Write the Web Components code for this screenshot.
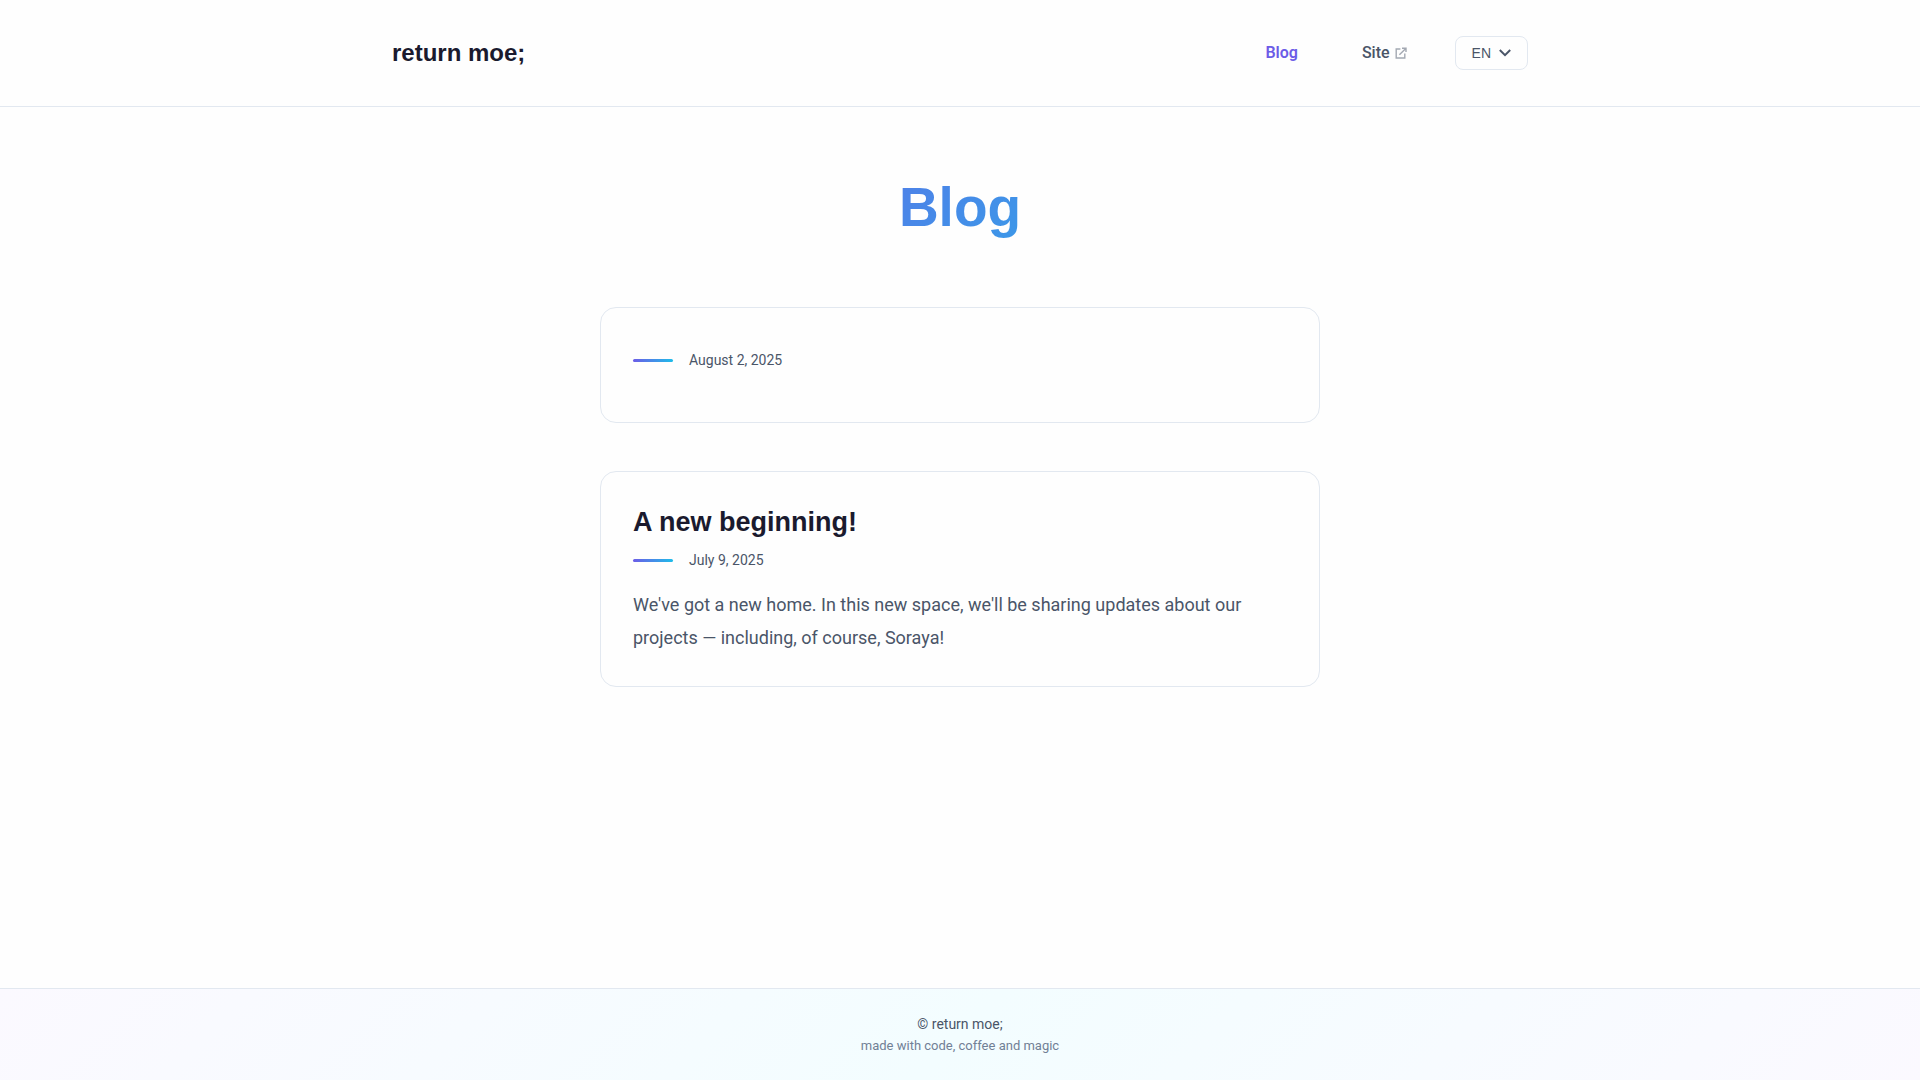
<!DOCTYPE html>
<html lang="en">
<head>
<meta charset="utf-8">
<meta name="viewport" content="width=device-width, initial-scale=1">
<title>Blog</title>
<style>
:root {
  --ink: #1a1a2e;
  --text: #4a5568;
  --muted: #718096;
  --line: #e2e8f0;
  --page: #fefefe;
  --accent: #6c5ce7;
  --accent-end: #1ebce9;
  --gradient: linear-gradient(135deg, #6c5ce7 0%, #1ebce9 100%);
  --heading-font: "Liberation Sans", Arial, sans-serif;
}
body {
  margin: 0;
  background: var(--page);
  color: var(--text);
  font: 400 16px/1.6 Roboto, sans-serif;
}
</style>
</head>
<body>
<blog-page>
  <site-header slot="header" brand="return moe;">
    <nav-link href="#blog" current>Blog</nav-link>
    <nav-link href="#site" external>Site</nav-link>
    <language-button slot="tools">EN</language-button>
  </site-header>
  <page-title>Blog</page-title>
  <post-card date="August 2, 2025" datetime="2025-08-02"></post-card>
  <post-card heading="A new beginning!" date="July 9, 2025" datetime="2025-07-09">We've got a new home. In this new space, we'll be sharing updates about our projects — including, of course, Soraya!</post-card>
  <site-footer slot="footer">
    <span>© return moe;</span>
    <span slot="note">made with code, coffee and magic</span>
  </site-footer>
</blog-page>
<script>
function define(name, render) {
  customElements.define(name, class extends HTMLElement {
    constructor() {
      super();
      this.attachShadow({ mode: "open" });
    }
    connectedCallback() {
      this.shadowRoot.innerHTML = render(this);
    }
  });
}

define("blog-page", () => `
  <style>
    :host { display: flex; flex-direction: column; min-height: 100vh; }
    main { flex: 1; padding: 64px 32px; }
    .column { display: flex; flex-direction: column; gap: 48px; max-width: 720px; margin: 0 auto; }
  </style>
  <slot name="header"></slot>
  <main><div class="column"><slot></slot></div></main>
  <slot name="footer"></slot>`);

define("site-header", el => `
  <style>
    :host { display: block; border-bottom: 1px solid var(--line); }
    .bar { display: flex; align-items: center; gap: 48px; max-width: 1136px; padding: 32px; margin: 0 auto; }
    .brand { margin-right: auto; color: var(--ink); font: 700 24px/42px var(--heading-font); text-decoration: none; }
    nav { display: flex; align-items: center; gap: 64px; }
  </style>
  <header class="bar">
    <a class="brand" href="#home">${el.getAttribute("brand")}</a>
    <nav aria-label="Main"><slot></slot></nav>
    <slot name="tools"></slot>
  </header>`);

define("nav-link", el => `
  <style>
    :host { display: block; }
    a { display: flex; align-items: center; gap: 5px; color: var(--text); font-weight: 500; line-height: 26px; text-decoration: none; }
    :host([current]) a { color: var(--accent); font-weight: 600; }
    svg { width: 12px; height: 12px; opacity: .5; }
  </style>
  <a href="${el.getAttribute("href")}"${el.hasAttribute("current") ? ' aria-current="page"' : ""}><slot></slot>${el.hasAttribute("external") ? `
    <svg viewBox="0 0 12 12" fill="none" stroke="currentColor" stroke-width="1.4" aria-hidden="true">
      <path d="M5.4 2H1.2v9h8.6V6.6M7 1.2h4V5M10.8 1.4 4.4 7.8"/>
    </svg>` : ""}</a>`);

define("language-button", () => `
  <style>
    :host { display: block; }
    button { display: flex; align-items: center; gap: 8px; height: 34px; padding: 0 16px; border: 1px solid var(--line); border-radius: 8px; background: transparent; color: var(--text); font: 400 14px/16px var(--heading-font); cursor: pointer; }
    svg { width: 12px; height: 12px; }
  </style>
  <button type="button" aria-haspopup="listbox"><slot></slot>
    <svg viewBox="0 0 12 12" fill="none" stroke="currentColor" stroke-width="2" aria-hidden="true"><path d="M.8 3 6 8.2 11.2 3"/></svg>
  </button>`);

define("page-title", () => `
  <style>
    :host { display: block; padding-bottom: 16px; }
    h1 { margin: 0; background: var(--gradient); background-clip: text; -webkit-background-clip: text; color: transparent; font: 700 55px/72px var(--heading-font); text-align: center; }
  </style>
  <h1><slot></slot></h1>`);

define("post-card", el => {
  const heading = el.getAttribute("heading");
  return `
  <style>
    :host { display: block; }
    article { padding: 32px; border: 1px solid var(--line); border-radius: 16px; }
    h2 { margin: 0 0 8px; color: var(--ink); font: 700 27px/36px var(--heading-font); }
    a { color: inherit; text-decoration: none; }
    .meta { display: flex; align-items: center; gap: 16px; font-size: 14px; line-height: 24px; }
    .meta::before { content: ""; width: 40px; height: 3px; border-radius: 2px; background: linear-gradient(90deg, var(--accent), var(--accent-end)); }
    .untitled { padding: 8px 0 18px; }
    p { margin: 16px 0 0; font-size: 18px; line-height: 33px; }
  </style>
  <article>
    ${heading ? `<h2><a href="#post">${heading}</a></h2>` : ""}
    <div class="meta${heading ? "" : " untitled"}"><time datetime="${el.getAttribute("datetime")}">${el.getAttribute("date")}</time></div>
    ${heading ? "<p><slot></slot></p>" : ""}
  </article>`;
});

define("site-footer", () => `
  <style>
    :host { display: block; border-top: 1px solid var(--line); background: linear-gradient(135deg, #fbf9ff 0%, #f3fdff 50%, #fbf9ff 100%); }
    footer { padding: 24px 32px; text-align: center; }
    div { font-size: 14px; line-height: 22px; }
    .note { color: var(--muted); font-size: 13px; line-height: 21px; }
  </style>
  <footer><div><slot></slot></div><div class="note"><slot name="note"></slot></div></footer>`);
</script>
</body>
</html>
